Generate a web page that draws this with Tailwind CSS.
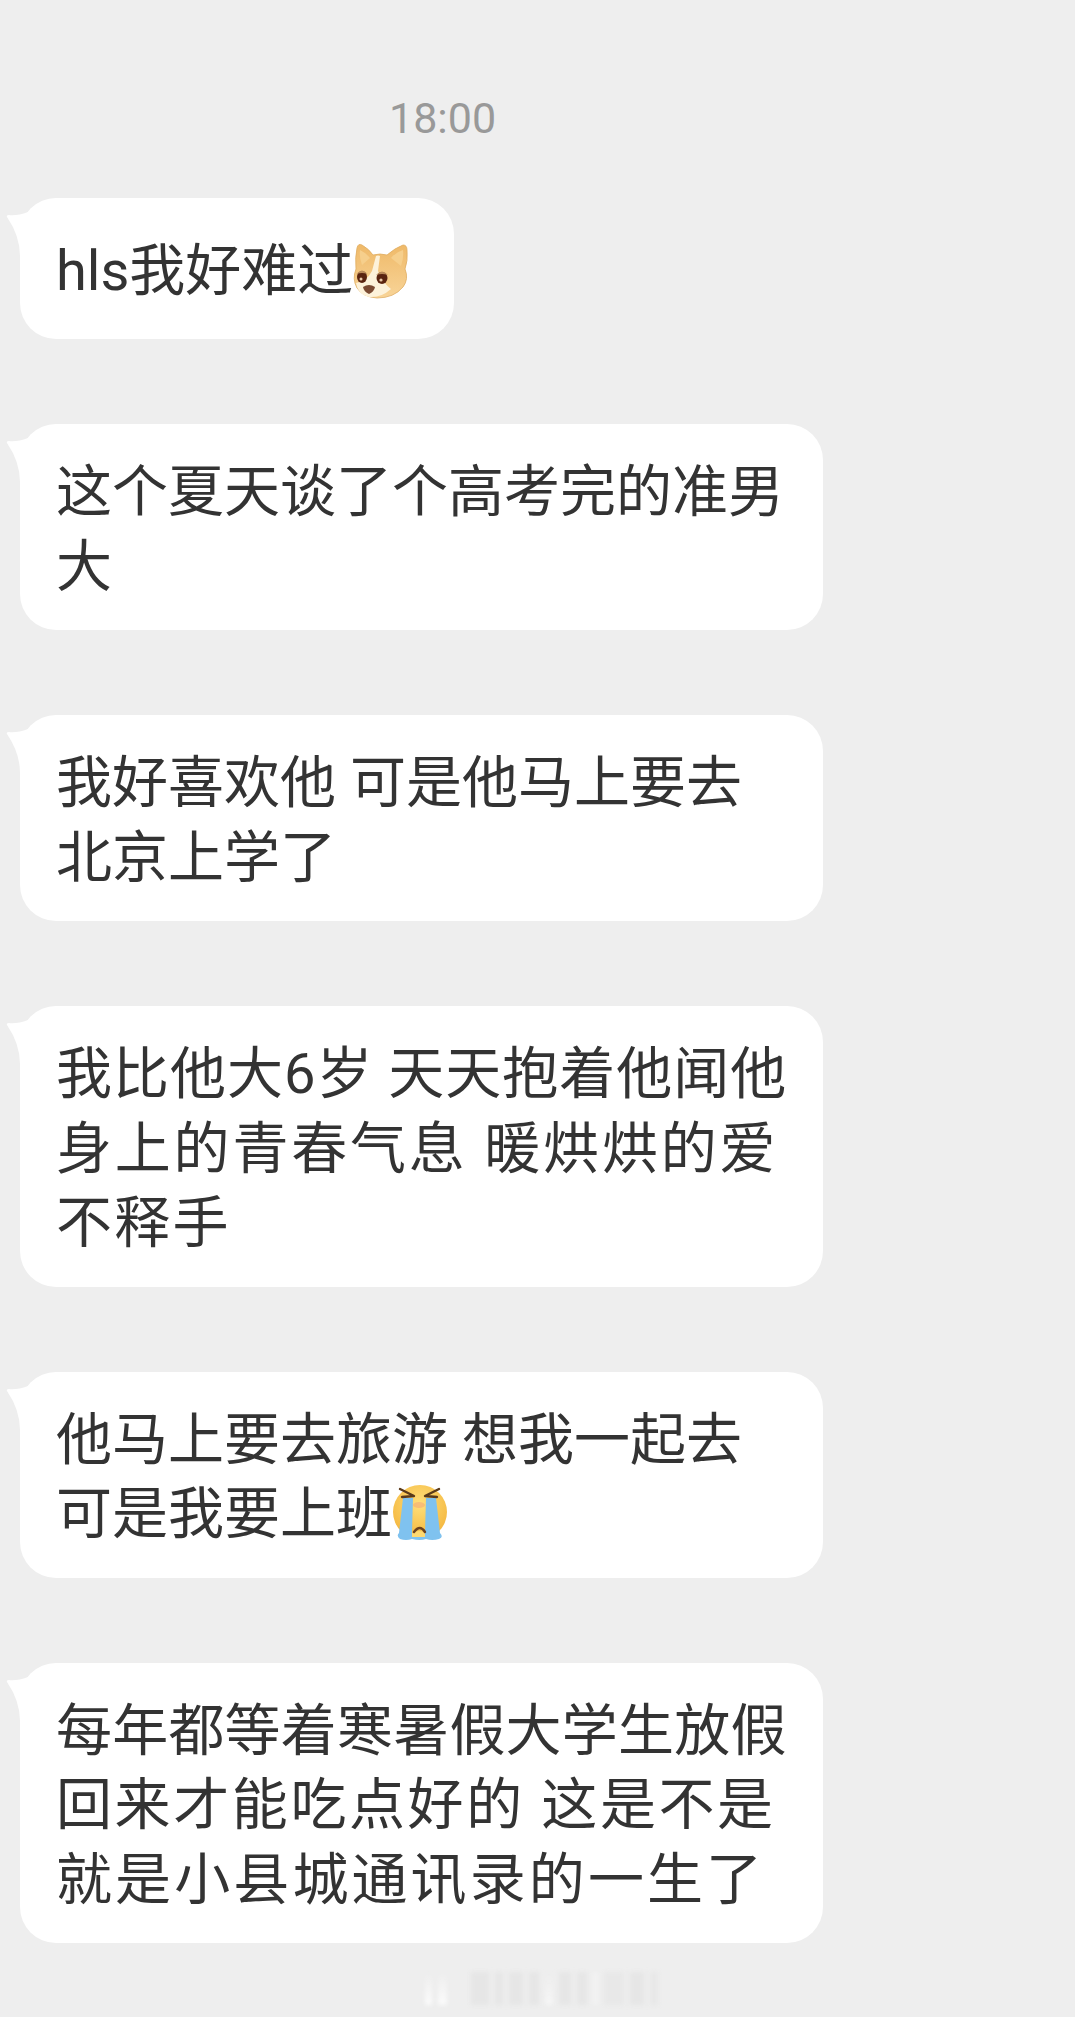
<!DOCTYPE html>
<html lang="zh-CN">
<head>
    <meta charset="UTF-8">
    <meta name="viewport" content="width=device-width, initial-scale=1.0">
    <title>Chat</title>
    <script src="https://cdn.jsdelivr.net/npm/@tailwindcss/browser@4"></script>
</head>
<body class="bg-[#eeeeee] h-[2017px] overflow-hidden relative font-['Roboto','Noto_Sans_CJK_SC',sans-serif] text-[#333333]">
    <!-- Time -->
    <div class="h-[198px] pl-[389px] pt-[93px] text-[43px] leading-[50px] text-[#999999]">18:00</div>

    <!-- Messages -->
    <main class="flex flex-col items-start gap-[85px] pl-[20px]">
        <div class="relative bg-white rounded-[36px] pl-[36px] pr-[45px] pt-[36px] pb-[30px] text-[56px] leading-[75px] whitespace-nowrap">
            <svg class="absolute left-[-14px] top-[10px]" width="30" height="50" viewBox="0 0 30 50"><path d="M1 9Q0 7 3 7Q11 8 22 4V48H14Q14 28 1 9Z" fill="#fff"/></svg>
            <span>hls我好难过</span><svg class="inline-block align-[-9px]" width="56" height="56" viewBox="0 0 56 56">
                <defs>
                    <linearGradient id="fur" x1="0" y1="0" x2="0" y2="1"><stop offset="0" stop-color="#efb968"/><stop offset="1" stop-color="#f8d498"/></linearGradient>
                </defs>
                <path d="M4 5Q5 0 9 2Q16 6 20 12Q27 10 34 12Q42 5 50 2Q54 2 54 7Q55 18 52 26Q56 36 50 44Q41 55 24 55Q10 54 4 45Q-1 36 3 26Q2 14 4 5Z" fill="url(#fur)" stroke="#e0ad62" stroke-width=".8"/>
                <path d="M7 7Q13 10 17 15L9 22Q6 14 7 7ZM50 7Q43 9 38 15L48 23Q51 14 50 7Z" fill="#f6cf8c"/>
                <path d="M23 13Q25 12 27 13L25 28Q30 40 38 46Q28 55 16 54Q5 52 3 40Q14 38 19 28Z" fill="#fdf2da"/>
                <ellipse cx="9" cy="34" rx="5" ry="6" fill="#5a2410"/>
                <ellipse cx="29" cy="35" rx="5.5" ry="6" fill="#5a2410"/>
                <path d="M3.5 31Q9 24 14.5 31Q9 29 3.5 31ZM23 32Q29 25 35 32Q29 30 23 32Z" fill="#b98a5a"/>
                <circle cx="8" cy="36" r="1.5" fill="#e8c8a8"/><circle cx="28" cy="37" r="1.6" fill="#e8c8a8"/>
                <path d="M10 44Q16 40 22 44Q21 49 16 51Q11 49 10 44Z" fill="#7a4a32"/>
            </svg>
        </div>

        <div class="relative bg-white rounded-[36px] w-[803px] pl-[36px] pt-[31px] pb-[26px] text-[56px] leading-[74.5px] whitespace-nowrap">
            <svg class="absolute left-[-14px] top-[10px]" width="30" height="50" viewBox="0 0 30 50"><path d="M1 9Q0 7 3 7Q11 8 22 4V48H14Q14 28 1 9Z" fill="#fff"/></svg>
            这个夏天谈了个高考完的准男<br>大
        </div>

        <div class="relative bg-white rounded-[36px] w-[803px] pl-[36px] pt-[31px] pb-[26px] text-[56px] leading-[74.5px] whitespace-nowrap">
            <svg class="absolute left-[-14px] top-[10px]" width="30" height="50" viewBox="0 0 30 50"><path d="M1 9Q0 7 3 7Q11 8 22 4V48H14Q14 28 1 9Z" fill="#fff"/></svg>
            我好喜欢他 可是他马上要去<br>北京上学了
        </div>

        <div class="relative bg-white rounded-[36px] w-[803px] pl-[36px] pt-[31px] pb-[26px] text-[56px] leading-[74.5px] whitespace-nowrap">
            <svg class="absolute left-[-14px] top-[10px]" width="30" height="50" viewBox="0 0 30 50"><path d="M1 9Q0 7 3 7Q11 8 22 4V48H14Q14 28 1 9Z" fill="#fff"/></svg>
            <span class="tracking-[1px]">我比他大6岁 天天抱着他闻他</span><br><span class="tracking-[2.8px]">身上的青春气息 暖烘烘的爱</span><br><span class="tracking-[2.3px]">不释手</span>
        </div>

        <div class="relative bg-white rounded-[36px] w-[803px] pl-[36px] pt-[31px] pb-[26px] text-[56px] leading-[74.5px] whitespace-nowrap">
            <svg class="absolute left-[-14px] top-[10px]" width="30" height="50" viewBox="0 0 30 50"><path d="M1 9Q0 7 3 7Q11 8 22 4V48H14Q14 28 1 9Z" fill="#fff"/></svg>
            他马上要去旅游 想我一起去<br>可是我要上班<svg class="inline-block align-[-9px]" width="56" height="58" viewBox="0 0 56 58">
                <defs>
                    <radialGradient id="face" cx="50%" cy="35%" r="65%"><stop offset="0" stop-color="#ffe07a"/><stop offset="1" stop-color="#f4b63e"/></radialGradient>
                </defs>
                <circle cx="28" cy="28" r="27" fill="url(#face)"/>
                <path d="M11 14H21L20 49H33L34 14H44L48 49Q52 53 47 55Q40 57 34 55Q28 57 20 55Q14 57 8 55Q4 52 7 49Z" fill="#7fc2ef"/>
                <path d="M20 49Q28 45 33 49V53H20Z" fill="#ffd970"/>
                <ellipse cx="27" cy="21" rx="6" ry="3" fill="#f4a877" opacity=".6"/>
                <path d="M8 5L22 12L10 13M47 5L33 12L45 13" fill="none" stroke="#5a3a1a" stroke-width="2.4" stroke-linecap="round" stroke-linejoin="round"/>
                <path d="M22 48Q28 40 33 48" fill="none" stroke="#6b4220" stroke-width="2.4" stroke-linecap="round"/>
            </svg>
        </div>

        <div class="relative bg-white rounded-[36px] w-[803px] pl-[36px] pt-[31px] pb-[26px] text-[56px] leading-[74.5px] whitespace-nowrap">
            <svg class="absolute left-[-14px] top-[10px]" width="30" height="50" viewBox="0 0 30 50"><path d="M1 9Q0 7 3 7Q11 8 22 4V48H14Q14 28 1 9Z" fill="#fff"/></svg>
            <span class="tracking-[0.2px]">每年都等着寒暑假大学生放假</span><br><span class="tracking-[2.6px]">回来才能吃点好的 这是不是</span><br><span class="tracking-[3.1px]">就是小县城通讯录的一生了</span>
        </div>
    </main>

    <!-- Faint watermark at the bottom -->
    <div class="absolute left-[425px] top-[1972px] flex items-stretch h-[33px] gap-[6px] blur-[2px]">
        <div class="w-[7px] bg-linear-to-b from-transparent to-white/80"></div>
        <div class="w-[9px] bg-linear-to-b from-transparent to-white/80 mr-[18px]"></div>
        <div class="w-[18px] bg-[#e6e6e6]"></div>
        <div class="w-[8px] bg-[#e6e6e6]"></div>
        <div class="w-[14px] bg-[#e6e6e6]"></div>
        <div class="w-[10px] bg-[#e6e6e6]"></div>
        <div class="w-[8px] bg-linear-to-b from-transparent to-white/50"></div>
        <div class="w-[12px] bg-[#e6e6e6]"></div>
        <div class="w-[10px] bg-[#e6e6e6]"></div>
        <div class="w-[5px] bg-white/30"></div>
        <div class="w-[20px] bg-[#e8e8e8]"></div>
        <div class="w-[14px] bg-[#e6e6e6]"></div>
        <div class="w-[8px] bg-[#e8e8e8]"></div>
    </div>
</body>
</html>
